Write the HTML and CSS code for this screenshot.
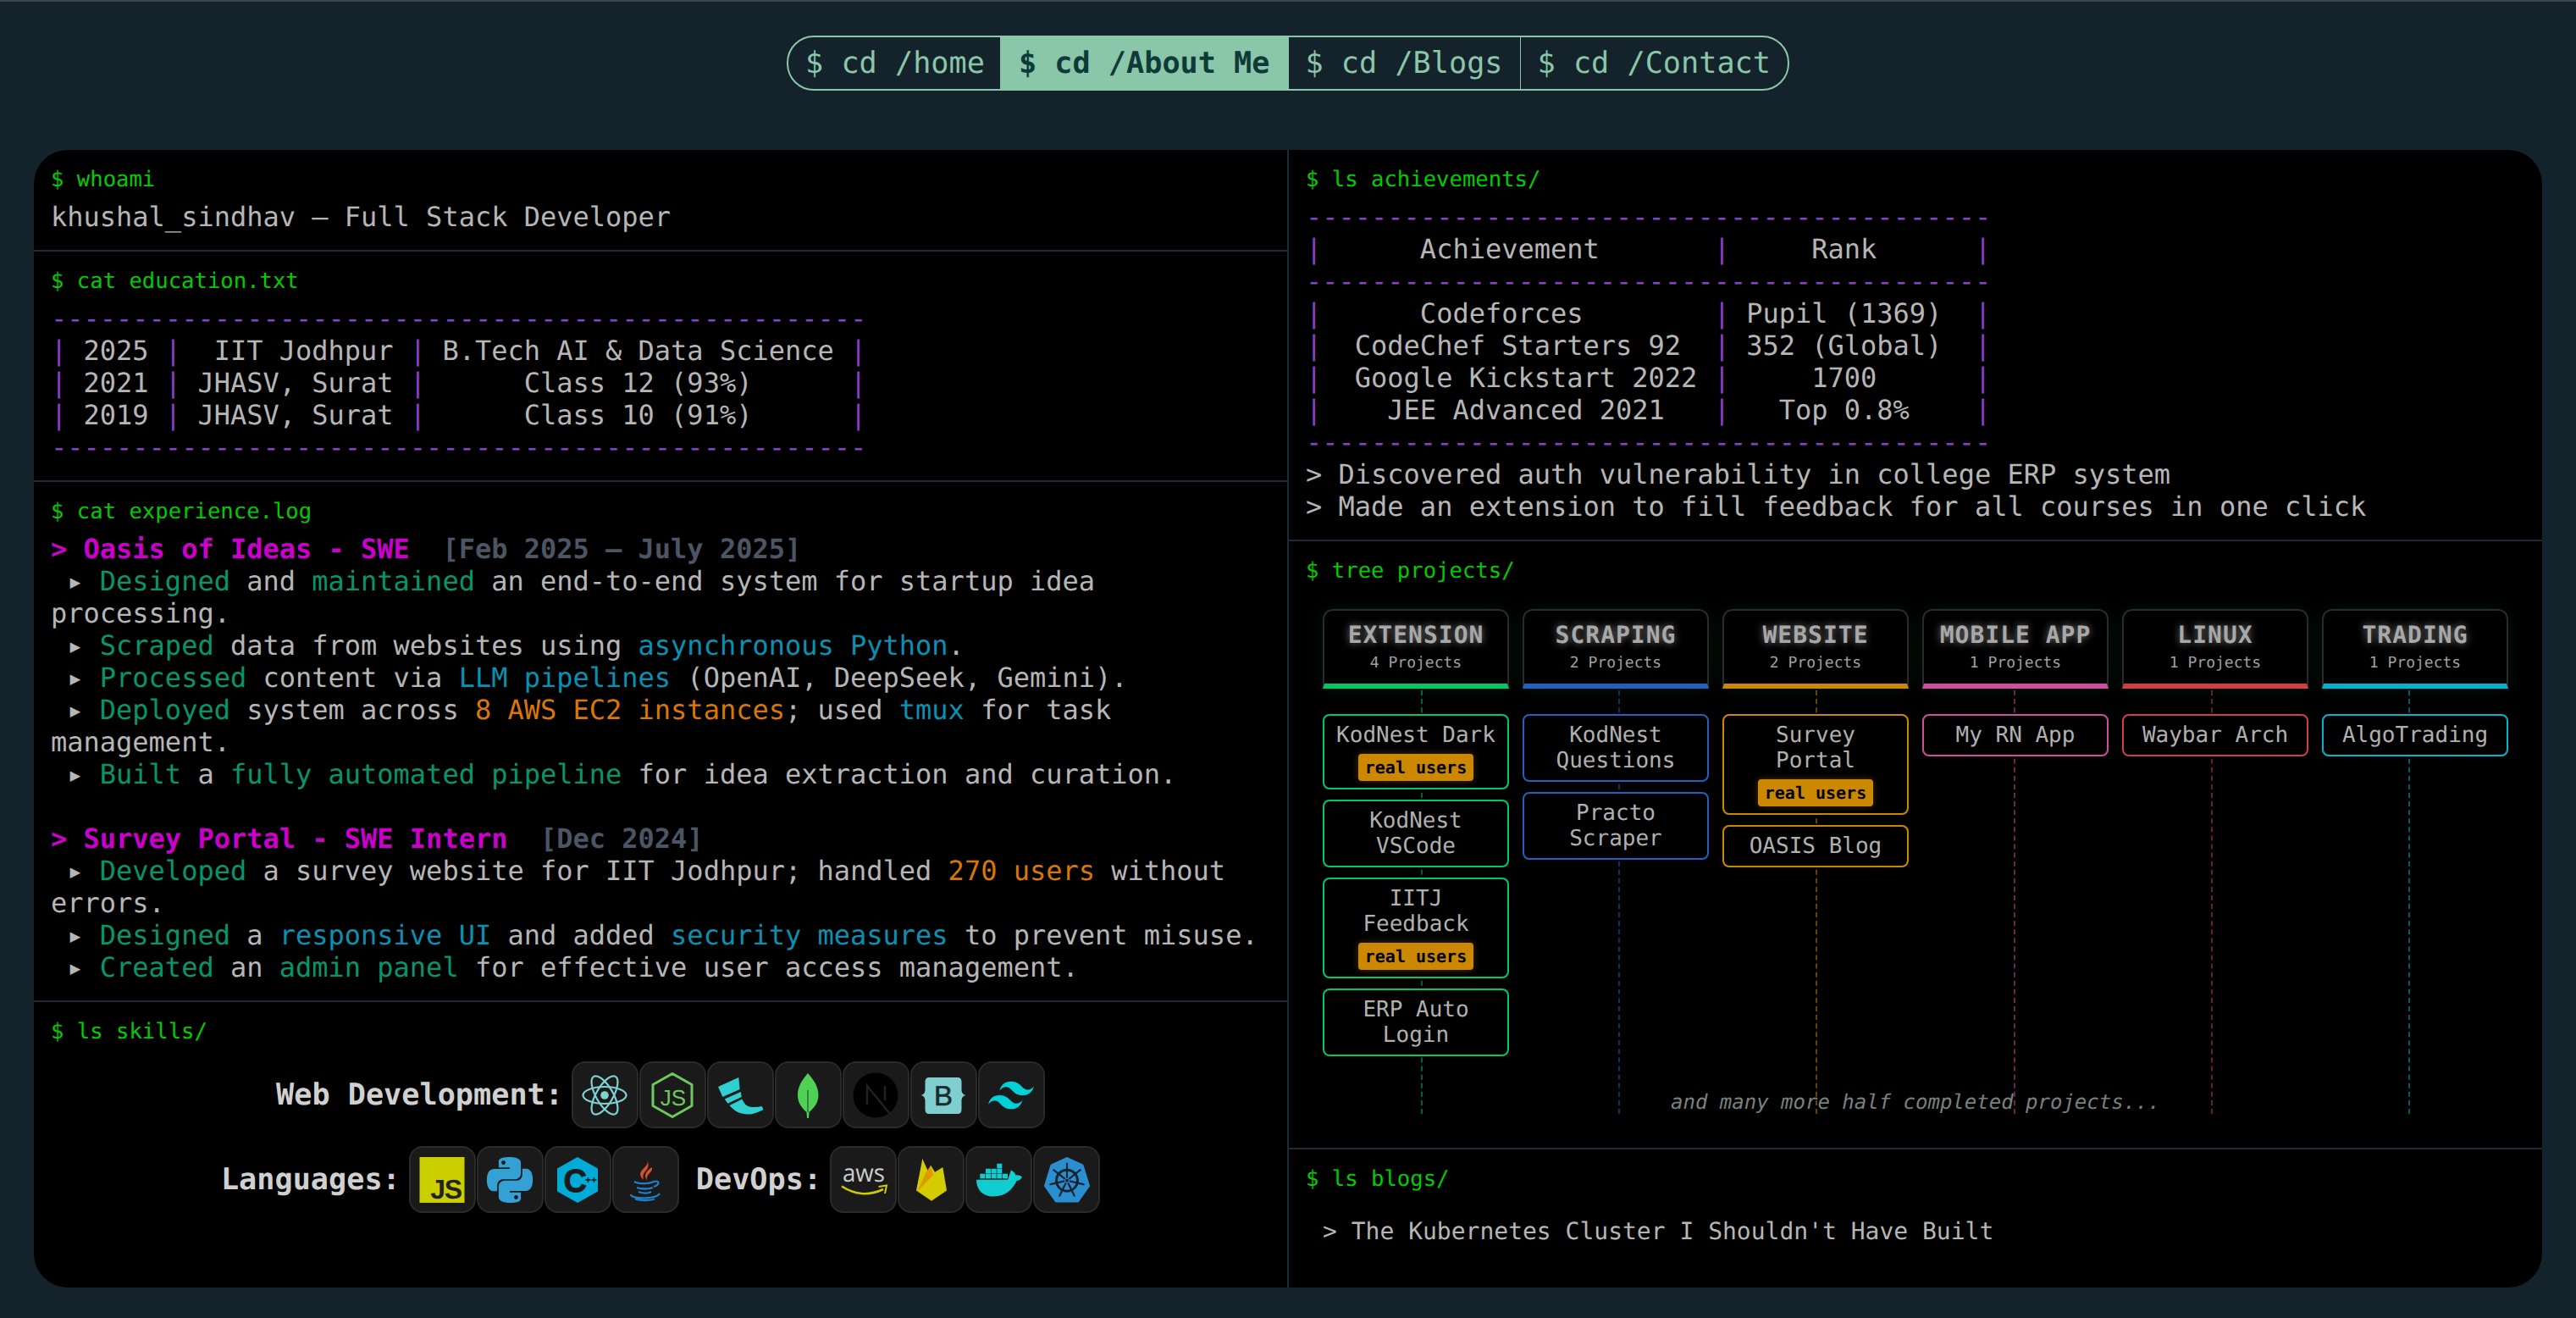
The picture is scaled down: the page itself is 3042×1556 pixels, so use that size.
FILE: index.html
```html
<!DOCTYPE html>
<html lang="en">
<head>
  <meta charset="UTF-8">
  <meta name="viewport" content="width=device-width, initial-scale=1">
  <title>About Me</title>
  <link rel="stylesheet" href="styles.css">
</head>
<body>

  <nav class="nav">
    <a class="nav-link">$ cd /home</a>
    <a class="nav-link active">$ cd /About Me</a>
    <a class="nav-link">$ cd /Blogs</a>
    <a class="nav-link">$ cd /Contact</a>
  </nav>

  <main class="terminal">
    <div class="col col-left">

      <section class="block">
        <div class="prompt">$ whoami</div>
        <div class="out">khushal_sindhav — Full Stack Developer</div>
      </section>

      <section class="block">
        <div class="prompt">$ cat education.txt</div>
<pre class="out"><span class="rule">--------------------------------------------------</span>
<span class="rule">|</span> 2025 <span class="rule">|</span>  IIT Jodhpur <span class="rule">|</span> B.Tech AI &amp; Data Science <span class="rule">|</span>
<span class="rule">|</span> 2021 <span class="rule">|</span> JHASV, Surat <span class="rule">|</span>      Class 12 (93%)      <span class="rule">|</span>
<span class="rule">|</span> 2019 <span class="rule">|</span> JHASV, Surat <span class="rule">|</span>      Class 10 (91%)      <span class="rule">|</span>
<span class="rule">--------------------------------------------------</span></pre>
      </section>

      <section class="block">
        <div class="prompt">$ cat experience.log</div>
<pre class="out log"><b class="job">&gt; Oasis of Ideas - SWE  <span class="date">[Feb 2025 — July 2025]</span></b>
 ▸ <span class="g">Designed</span> and <span class="g">maintained</span> an end-to-end system for startup idea processing.
 ▸ <span class="g">Scraped</span> data from websites using <span class="c">asynchronous Python</span>.
 ▸ <span class="g">Processed</span> content via <span class="c">LLM pipelines</span> (OpenAI, DeepSeek, Gemini).
 ▸ <span class="g">Deployed</span> system across <span class="o">8 AWS EC2 instances</span>; used <span class="c">tmux</span> for task management.
 ▸ <span class="g">Built</span> a <span class="g">fully automated pipeline</span> for idea extraction and curation.

<b class="job">&gt; Survey Portal - SWE Intern  <span class="date">[Dec 2024]</span></b>
 ▸ <span class="g">Developed</span> a survey website for IIT Jodhpur; handled <span class="o">270 users</span> without errors.
 ▸ <span class="g">Designed</span> a <span class="c">responsive UI</span> and added <span class="c">security measures</span> to prevent misuse.
 ▸ <span class="g">Created</span> an <span class="g">admin panel</span> for effective user access management.</pre>
      </section>

      <section class="block block-last">
        <div class="prompt">$ ls skills/</div>
        <div class="skills">
          <div class="skill-row">
            <span class="skill-label">Web Development:</span>
            <div class="tiles">
              <div class="tile">
                <svg viewBox="0 0 54 54" class="icon"><g fill="none" stroke="#7fd2d2" stroke-width="2.2"><ellipse cx="27" cy="27" rx="25.5" ry="10"/><ellipse cx="27" cy="27" rx="25.5" ry="10" transform="rotate(60 27 27)"/><ellipse cx="27" cy="27" rx="25.5" ry="10" transform="rotate(120 27 27)"/></g><circle cx="27" cy="27" r="4.8" fill="#7fd2d2"/></svg>
              </div>
              <div class="tile">
                <svg viewBox="0 0 54 54" class="icon"><path d="M27 1.500 50 14.500V39.500L27 52.500 4 39.500V14.500Z" fill="none" stroke="#6cc95a" stroke-width="3" stroke-linejoin="round"/><text x="28" y="39" text-anchor="middle" class="svg-sans" font-size="26" fill="#6cc95a">JS</text></svg>
              </div>
              <div class="tile">
                <svg viewBox="0 0 54 54" class="icon"><path d="M1 17 25.3 6 26.6 20 6.3 29ZM8.8 31.5 27.7 23 28.8 29 12.4 36.8ZM14.5 39 29.5 31.5C31 36 34 39.5 38 40.5 43 41.5 48 41 52.7 40L54.5 44C48 47.5 42 49.5 36.6 49.5 28 49.5 20 46 14.5 39Z" fill="#2fd0d0"/></svg>
              </div>
              <div class="tile">
                <svg viewBox="0 0 54 54" class="icon"><path d="M27 1C33 8 39.5 16 39.5 27 39.5 37 33 43 28.5 47L28 54H26L25.5 47C21 43 15 37 15 27 15 16 21 8 27 1Z" fill="#4fd155"/><path d="M27 21V47" stroke="#1a3a1e" stroke-width="1"/></svg>
              </div>
              <div class="tile">
                <svg viewBox="0 0 54 54" class="icon"><circle cx="27" cy="27" r="26.5" fill="#000"/><path d="M17 38V16L44 49M38 16V33" fill="none" stroke="#222" stroke-width="2.4"/></svg>
              </div>
              <div class="tile">
                <svg viewBox="0 0 54 54" class="icon"><path d="M10 6H44C47 6 48.5 8 48.5 11V20C48.5 24 50 26.5 54 27 50 27.5 48.5 30 48.5 34V44C48.5 47 47 49 44 49H10C7 49 5.5 47 5.5 44V34C5.5 30 4 27.5 0 27 4 26.5 5.5 24 5.5 20V11C5.5 8 7 6 10 6Z" fill="#80cfd0"/><text x="27" y="39" text-anchor="middle" class="svg-sans" font-size="33" fill="#1a2a2e" stroke="#1a2a2e" stroke-width="0.6">B</text></svg>
              </div>
              <div class="tile">
                <svg viewBox="0 0 24 24" class="icon"><path d="M12.001 4.8c-3.2 0-5.2 1.6-6 4.8 1.2-1.6 2.6-2.2 4.2-1.8.913.228 1.565.89 2.288 1.624C13.666 10.618 15.027 12 18.001 12c3.2 0 5.2-1.6 6-4.8-1.2 1.6-2.6 2.2-4.2 1.8-.913-.228-1.565-.89-2.288-1.624C16.337 6.182 14.976 4.8 12.001 4.8zm-6 7.2c-3.2 0-5.2 1.6-6 4.8 1.2-1.6 2.6-2.2 4.2-1.8.913.228 1.565.89 2.288 1.624 1.177 1.194 2.538 2.576 5.512 2.576 3.2 0 5.2-1.6 6-4.8-1.2 1.6-2.6 2.2-4.2 1.8-.913-.228-1.565-.89-2.288-1.624C10.337 13.382 8.976 12 6.001 12z" fill="#00d1d6"/></svg>
              </div>
            </div>
          </div>

          <div class="skill-row">
            <span class="skill-label">Languages:</span>
            <div class="tiles">
              <div class="tile">
                <svg viewBox="0 0 54 54" class="icon"><rect x="0.5" width="53" height="54" fill="#cbcf00"/><text x="49.5" y="49" text-anchor="end" class="svg-sans-bold" font-size="32" letter-spacing="-1.5" fill="#222">JS</text></svg>
              </div>
              <div class="tile">
                <svg viewBox="0 0 24 24" class="icon"><path d="M14.25.18l.9.2.73.26.59.3.45.32.34.34.25.34.16.33.1.3.04.26.02.2-.01.13V8.5l-.05.63-.13.55-.21.46-.26.38-.3.31-.33.25-.35.19-.35.14-.33.1-.3.07-.26.04-.21.02H8.77l-.69.05-.59.14-.5.22-.41.27-.33.32-.27.35-.2.36-.15.37-.1.35-.07.32-.04.27-.02.21v3.06H3.17l-.21-.03-.28-.07-.32-.12-.35-.18-.36-.26-.36-.36-.35-.46-.32-.59-.28-.73-.21-.88-.14-1.05-.05-1.23.06-1.22.16-1.04.24-.87.32-.71.36-.57.4-.44.42-.33.42-.24.4-.16.36-.1.32-.05.24-.01h.16l.06.01h8.16v-.83H6.18l-.01-2.75-.02-.37.05-.34.11-.31.17-.28.25-.26.31-.23.38-.2.44-.18.51-.15.58-.12.64-.1.71-.06.77-.04.84-.02 1.27.05zm-6.3 1.98l-.23.33-.08.41.08.41.23.34.33.22.41.09.41-.09.33-.22.23-.34.08-.41-.08-.41-.23-.33-.33-.22-.41-.09-.41.09zm13.09 3.95l.28.06.32.12.35.18.36.27.36.35.35.47.32.59.28.73.21.88.14 1.04.05 1.23-.06 1.23-.16 1.04-.24.86-.32.71-.36.57-.4.45-.42.33-.42.24-.4.16-.36.09-.32.05-.24.02-.16-.01h-8.22v.82h5.84l.01 2.76.02.36-.05.34-.11.31-.17.29-.25.25-.31.24-.38.2-.44.17-.51.15-.58.13-.64.09-.71.07-.77.04-.84.01-1.27-.04-1.07-.14-.9-.2-.73-.25-.59-.3-.45-.33-.34-.34-.25-.34-.16-.33-.1-.3-.04-.25-.02-.2.01-.13v-5.34l.05-.64.13-.54.21-.46.26-.38.3-.32.33-.24.35-.2.35-.14.33-.1.3-.06.26-.04.21-.02.13-.01h5.84l.69-.05.59-.14.5-.21.41-.28.33-.32.27-.35.2-.36.15-.36.1-.35.07-.32.04-.28.02-.21V6.07h2.09l.14.01zm-6.47 14.25l-.23.33-.08.41.08.41.23.33.33.23.41.08.41-.08.33-.23.23-.33.08-.41-.08-.41-.23-.33-.33-.23-.41-.08-.41.08z" fill="#35a0d4"/></svg>
              </div>
              <div class="tile">
                <svg viewBox="0 0 54 54" class="icon"><path d="M27 1 50 14V40L27 53 4 40V14Z" fill="#00acd7" stroke="#00acd7" stroke-width="2" stroke-linejoin="round"/><text x="10.5" y="41" class="svg-sans-bold" font-size="38" fill="#1a1a1a" stroke="#1a1a1a" stroke-width="1">C</text><text x="36" y="31" class="svg-sans-bold" font-size="12" fill="#1a1a1a">++</text></svg>
              </div>
              <div class="tile">
                <svg viewBox="0 0 54 54" class="icon"><path d="M29.7 4.3C31 10 24 13 21.5 18 20 22 23 25 25 27 24 23 24 20 27 17 30 14 32 10 29.7 4.3ZM35 12C32 14 27 18 27 22 27 24 28 26 29 28 28 24 30 21 32 19 34 17 35.5 15 35 12Z" fill="#d9512c"/><path d="M14 29C19 32 32 32 38 28.5M38 29C44 27 44 33 37 35M17 36C22 38 31 38 36 36M19 41C24 43 30 43 34 41M10 44C10 50 40 50 44 43M15 49.500C23 52 34 51 38 49.500" fill="none" stroke="#1e7fc8" stroke-width="2.3"/></svg>
              </div>
            </div>
            <span class="skill-label skill-label-next">DevOps:</span>
            <div class="tiles">
              <div class="tile">
                <svg viewBox="0 0 54 54" class="icon"><text x="27" y="29" text-anchor="middle" class="svg-open" font-size="29" textLength="50" lengthAdjust="spacingAndGlyphs" fill="#ccc">aws</text><path d="M1 34.500Q25 50 50 38" fill="none" stroke="#d0cc00" stroke-width="2.5"/><path d="M44.500 35 54 33.500 52 43" fill="none" stroke="#d0cc00" stroke-width="2"/></svg>
              </div>
              <div class="tile">
                <svg viewBox="0 0 54 54" class="icon"><path d="M9 39.500 16.300 2 23 17 26 9.500 31 17.700 40.300 12 45 39.500 27 51.700Z" fill="#d2cc00"/><path d="M10 41 21 17 26 10.500 29 21Z" fill="#e09a00"/></svg>
              </div>
              <div class="tile">
                <svg viewBox="0 0 54 54" class="icon"><path d="M0 26.700H37C38.500 24 39 20 41 15.500 44 17 46 19 46.500 21.500 49 21 52 22 54 23.500 52.500 26.500 50 28 47.500 28 43 38 35 46.500 20 46.500 7 46.500 0 38 0 26.700Z" fill="#10cdd0"/><path d="M24.300 7.700h6v5.600h-6zM11 13.700h6v5.600h-6zM17.700 13.700h6v5.600h-6zM24.300 13.700h6v5.600h-6zM4.300 19.700h6v5.600h-6zM11 19.700h6v5.600h-6zM17.700 19.700h6v5.600h-6zM24.300 19.700h6v5.600h-6zM31 19.700h6v5.600h-6z" fill="#10cdd0"/></svg>
              </div>
              <div class="tile">
                <svg viewBox="0 0 54 54" class="icon"><path d="M27 1.500 45 9.800 52.500 34 39.800 52 14.200 52 1.500 34 9 9.800Z" fill="#2a8fd0" stroke="#2a8fd0" stroke-width="3" stroke-linejoin="round"/><circle cx="27" cy="27.700" r="12.500" fill="none" stroke="#1a2430" stroke-width="3"/><circle cx="27" cy="27.700" r="2" fill="#1a2430"/><path d="M27 24.700V6.700M29.300 25.800 43.400 14.600M29.900 28.400 47.500 32.400M28.300 30.400 36.100 46.600M25.700 30.400 17.900 46.600M24.100 28.400 6.500 32.400M24.700 25.800 10.600 14.600" stroke="#1a2430" stroke-width="2.200"/></svg>
              </div>
            </div>
          </div>
        </div>
      </section>
    </div>

    <div class="col col-right">

      <section class="block">
        <div class="prompt">$ ls achievements/</div>
<pre class="out"><span class="rule">------------------------------------------</span>
<span class="rule">|</span>      Achievement       <span class="rule">|</span>     Rank      <span class="rule">|</span>
<span class="rule">------------------------------------------</span>
<span class="rule">|</span>      Codeforces        <span class="rule">|</span> Pupil (1369)  <span class="rule">|</span>
<span class="rule">|</span>  CodeChef Starters 92  <span class="rule">|</span> 352 (Global)  <span class="rule">|</span>
<span class="rule">|</span>  Google Kickstart 2022 <span class="rule">|</span>     1700      <span class="rule">|</span>
<span class="rule">|</span>    JEE Advanced 2021   <span class="rule">|</span>   Top 0.8%    <span class="rule">|</span>
<span class="rule">------------------------------------------</span>
&gt; Discovered auth vulnerability in college ERP system
&gt; Made an extension to fill feedback for all courses in one click</pre>
      </section>

      <section class="block">
        <div class="prompt">$ tree projects/</div>
        <div class="tree">
          <div class="tree-lines">
            <div class="tree-line line-green"></div>
            <div class="tree-line line-blue"></div>
            <div class="tree-line line-orange"></div>
            <div class="tree-line line-pink"></div>
            <div class="tree-line line-red"></div>
            <div class="tree-line line-cyan"></div>
          </div>
          <div class="tree-cols">
            <div class="tree-col col-green">
              <div class="col-head"><div class="col-title">EXTENSION</div><div class="col-count">4 Projects</div></div>
              <div class="project">KodNest Dark<span class="badge">real users</span></div>
              <div class="project">KodNest VSCode</div>
              <div class="project">IITJ Feedback<span class="badge">real users</span></div>
              <div class="project">ERP Auto Login</div>
            </div>
            <div class="tree-col col-blue">
              <div class="col-head"><div class="col-title">SCRAPING</div><div class="col-count">2 Projects</div></div>
              <div class="project">KodNest Questions</div>
              <div class="project">Practo Scraper</div>
            </div>
            <div class="tree-col col-orange">
              <div class="col-head"><div class="col-title">WEBSITE</div><div class="col-count">2 Projects</div></div>
              <div class="project">Survey Portal<span class="badge">real users</span></div>
              <div class="project">OASIS Blog</div>
            </div>
            <div class="tree-col col-pink">
              <div class="col-head"><div class="col-title">MOBILE APP</div><div class="col-count">1 Projects</div></div>
              <div class="project">My RN App</div>
            </div>
            <div class="tree-col col-red">
              <div class="col-head"><div class="col-title">LINUX</div><div class="col-count">1 Projects</div></div>
              <div class="project">Waybar Arch</div>
            </div>
            <div class="tree-col col-cyan">
              <div class="col-head"><div class="col-title">TRADING</div><div class="col-count">1 Projects</div></div>
              <div class="project">AlgoTrading</div>
            </div>
          </div>
          <div class="tree-note">and many more half completed projects...</div>
        </div>
      </section>

      <section class="block block-last">
        <div class="prompt">$ ls blogs/</div>
        <div class="blog">&gt; The Kubernetes Cluster I Shouldn't Have Built</div>
      </section>
    </div>
  </main>

</body>
</html>
```

FILE: styles.css
```css
* {
  box-sizing: border-box;
}
html, body {
  margin: 0;
  height: 100%;
}
body {
  font-family: "DejaVu Sans Mono", monospace;
  text-rendering: geometricPrecision;
  background-color: #14232b;
  border-top: 2px solid #3d4650;
  color: #b6b6b6;
  overflow: hidden;
}

/* top nav */
.nav {
  display: flex;
  width: fit-content;
  margin: 40px auto 0;
  border: 2px solid #8ac6a8;
  border-radius: 32px;
  overflow: hidden;
  font-size: 35.2px;
  color: #8ac6a8;
}
.nav-link {
  padding: 10px 20px;
  border-right: 1px solid #8ac6a8;
  white-space: pre;
}
.nav-link:first-child {
  padding-right: 18px;
}
.nav-link:last-child {
  border-right: none;
}
.nav-link.active {
  padding: 10px 21px;
  background-color: #8ac6a8;
  color: #0f3a3a;
  font-weight: bold;
}

/* main panel */
.terminal {
  display: grid;
  grid-template-columns: 1480px 1fr;
  height: 1343px;
  margin: 70px 40px 0;
  background-color: #000;
  border-radius: 40px;
  overflow: hidden;
}
.col-right {
  border-left: 2px solid #1c2c36;
}
.block {
  padding: 20px;
  border-bottom: 2px solid #1c2c36;
}
.block-last {
  border-bottom: none;
}
.prompt {
  font-size: 25.6px;
  color: #00cc00;
  margin-bottom: 10px;
}
.out {
  margin: 0;
  font-family: inherit;
  font-size: 32px;
}
.rule {
  color: #8a3fc9;
}

/* experience */
.log {
  white-space: pre-wrap;
}
.job {
  color: #cc00cc;
}
.date {
  color: #4b5563;
}
.g {
  color: #059669;
}
.c {
  color: #0891b2;
}
.o {
  color: #d97706;
}

/* skills */
.skills {
  display: flex;
  flex-direction: column;
  align-items: center;
  gap: 21px;
  margin-top: 20px;
}
.skill-row {
  display: flex;
  align-items: center;
}
.skill-label {
  font-size: 35.2px;
  font-weight: bold;
  color: #d0d0d0;
  margin-right: 10px;
}
.skill-label-next {
  margin-left: 20px;
}
.tiles {
  display: flex;
  gap: 1px;
}
.tile {
  display: flex;
  align-items: center;
  justify-content: center;
  width: 79px;
  height: 79px;
  background-color: #1a1a1a;
  border: 2px solid #2a2a2a;
  border-radius: 16px;
}
.icon {
  display: block;
  width: 54px;
  height: 54px;
  overflow: visible;
}
.svg-sans {
  font-family: "Liberation Sans", sans-serif;
}
.svg-sans-bold {
  font-family: "Liberation Sans", sans-serif;
  font-weight: bold;
}
.svg-open {
  font-family: "Open Sans", sans-serif;
}

/* project tree */
.tree {
  position: relative;
  height: 636px;
  margin-top: 10px;
  padding: 20px;
}
.tree-lines {
  position: absolute;
  top: 116px;
  left: 20px;
  right: 20px;
  bottom: 20px;
  display: grid;
  grid-template-columns: repeat(6, 1fr);
}
.tree-line {
  width: calc(50% + 1px);
  border-right: 2px dashed;
  opacity: 0.5;
}
.line-green { border-color: #00c864; }
.line-blue { border-color: #2060c0; }
.line-orange { border-color: #cc8800; }
.line-pink { border-color: #d04da0; }
.line-red { border-color: #d04040; }
.line-cyan { border-color: #00b4d0; }

.tree-cols {
  position: relative;
  display: grid;
  grid-template-columns: repeat(6, 1fr);
  gap: 16px;
}
.col-green { --accent: #00c864; }
.col-blue { --accent: #2060c0; }
.col-orange { --accent: #cc8800; }
.col-pink { --accent: #d04da0; }
.col-red { --accent: #d04040; }
.col-cyan { --accent: #00b4d0; }

.col-head {
  margin-bottom: 30px;
  padding: 12px 8px 14px;
  text-align: center;
  background-color: #000;
  border: 2px solid #2a2a2a;
  border-bottom: 6px solid var(--accent);
  border-radius: 12px 12px 0 0;
  box-shadow: 0 0 20px rgba(0, 200, 100, 0.1);
}
.col-title {
  font-size: 28px;
  font-weight: bold;
  letter-spacing: 1px;
  color: #a8a8a8;
  text-shadow: 0 0 10px rgba(200, 200, 200, 0.6);
}
.col-count {
  margin-top: 6px;
  font-size: 18px;
  color: #a0a0a0;
}
.project {
  margin-bottom: 12px;
  padding: 8px;
  text-align: center;
  font-size: 26px;
  color: #b0b0b0;
  background-color: #000;
  border: 2px solid var(--accent);
  border-radius: 8px;
}
.badge {
  display: block;
  width: fit-content;
  margin: 7px auto 0;
  padding: 4px 8px;
  font-size: 20px;
  font-weight: bold;
  color: #000;
  background-color: #cc8800;
  border-radius: 4px;
  box-shadow: 0 0 8px rgba(204, 136, 0, 0.35);
}
.tree-note {
  position: absolute;
  left: 0;
  right: 0;
  bottom: 20px;
  text-align: center;
  font-size: 24px;
  font-style: italic;
  color: #78827f;
}

/* blogs */
.blog {
  margin-top: 30px;
  padding-left: 20px;
  font-size: 28px;
}
```
